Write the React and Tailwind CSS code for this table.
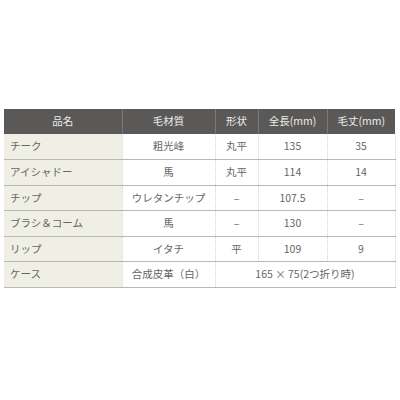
import React from "react";

const rows = [
  ["チーク", "粗光峰", "丸平", "135", "35"],
  ["アイシャドー", "馬", "丸平", "114", "14"],
  ["チップ", "ウレタンチップ", "–", "107.5", "–"],
  ["ブラシ＆コーム", "馬", "–", "130", "–"],
  ["リップ", "イタチ", "平", "109", "9"],
];

export default function App() {
  const td = "h-[25.5px] p-0 text-center border-b border-b-[#b8b8b8] border-l border-l-[#d4d4d4] border-dotted [border-bottom-style:solid]";
  return (
    <div className="w-[400px] h-[400px] bg-white pt-[109px] pl-[4px]" style={{ fontFamily: '"Noto Sans CJK JP", "Noto Sans", sans-serif' }}>
      <table className="w-[391px] border-collapse table-fixed text-[10.5px] leading-none text-[#666]">
        <colgroup>
          <col className="w-[118px]" />
          <col className="w-[93px]" />
          <col className="w-[43px]" />
          <col className="w-[69px]" />
          <col className="w-[68px]" />
        </colgroup>
        <thead>
          <tr className="bg-[#5b5957] text-[#ececec] h-[25px]">
            <th className="font-normal p-0 text-center">品名</th>
            <th className="font-normal p-0 text-center border-l border-[#7a7876]">毛材質</th>
            <th className="font-normal p-0 text-center border-l border-[#7a7876]">形状</th>
            <th className="font-normal p-0 text-center border-l border-[#7a7876]">全長(mm)</th>
            <th className="font-normal p-0 text-center border-l border-[#7a7876]">毛丈(mm)</th>
          </tr>
        </thead>
        <tbody>
          {rows.map((r) => (
            <tr key={r[0]}>
              <td className="h-[25.5px] p-0 pl-[6px] text-left bg-[#efefe6] border-b border-[#b8b8b8]">{r[0]}</td>
              <td className={td}>{r[1]}</td>
              <td className={td}>{r[2]}</td>
              <td className={td}>{r[3]}</td>
              <td className={td + " border-r border-r-[#d4d4d4]"}>{r[4]}</td>
            </tr>
          ))}
          <tr>
            <td className="h-[25.5px] p-0 pl-[6px] text-left bg-[#efefe6] border-b border-[#b8b8b8]">ケース</td>
            <td className={td}>合成皮革（白）</td>
            <td colSpan={3} className={td + " border-r border-r-[#d4d4d4]"}>165 × 75(2つ折り時)</td>
          </tr>
        </tbody>
      </table>
    </div>
  );
}
